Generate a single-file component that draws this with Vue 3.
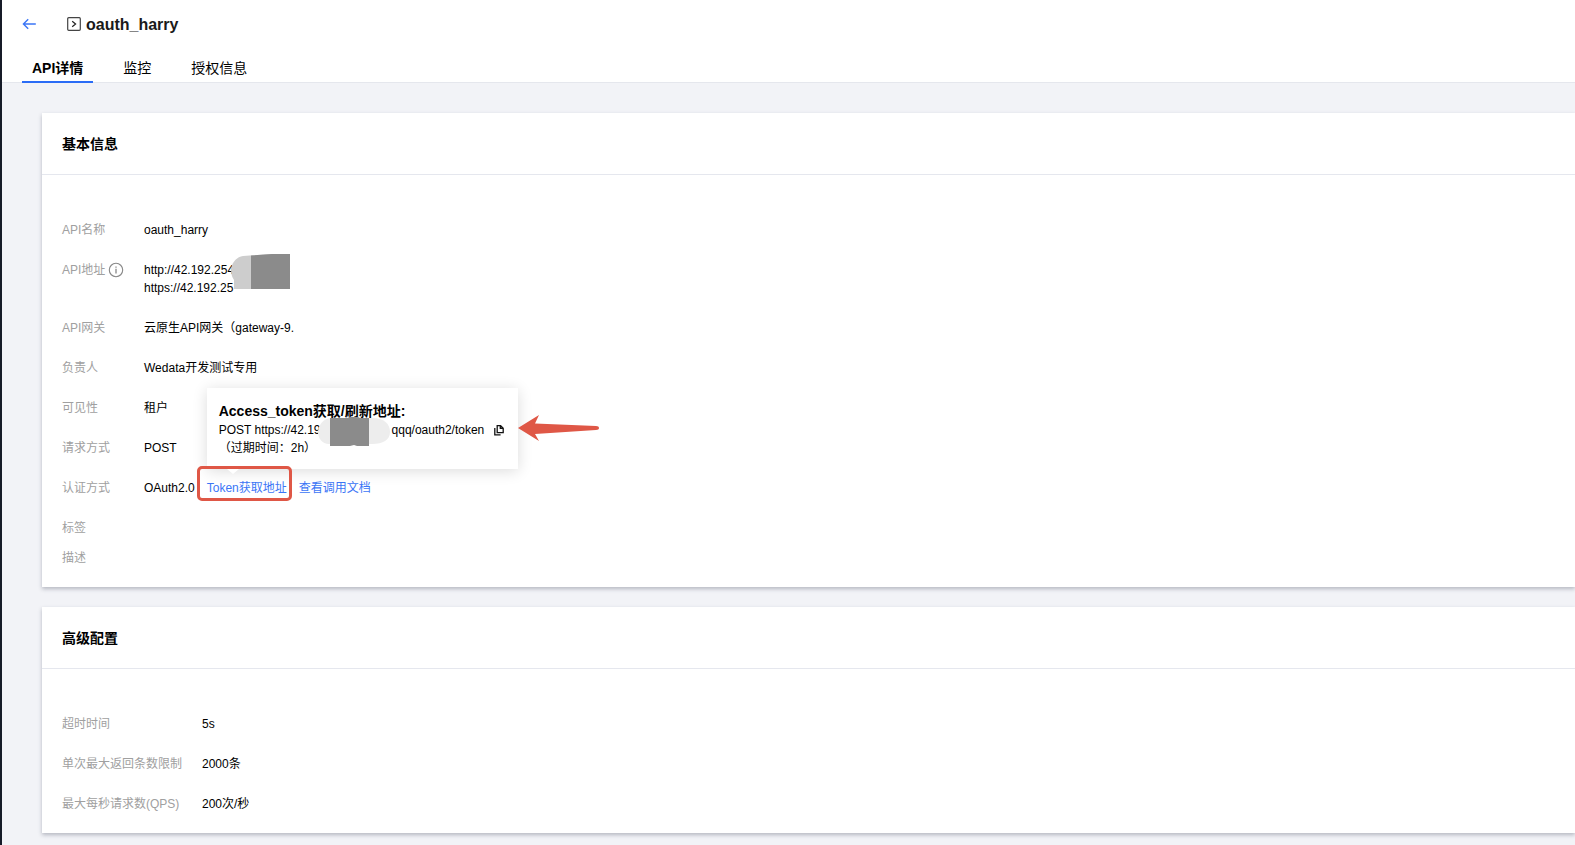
<script setup>
import { ref } from 'vue'

const tabs = ['API详情', '监控', '授权信息']
const active = ref(0)

const advanced = [
  { label: '超时时间', value: '5s' },
  { label: '单次最大返回条数限制', value: '2000条' },
  { label: '最大每秒请求数(QPS)', value: '200次/秒' },
]
</script>

<template>
  <div class="page">
    <header class="header">
      <div class="title-row">
        <button class="back" type="button" aria-label="返回">
          <svg width="14" height="12" viewBox="0 0 14 12" fill="none" stroke="currentColor" stroke-width="1.4">
            <path d="M6.2 1.2 1.4 6 6.2 10.8M1.4 6H13.8" />
          </svg>
        </button>
        <svg class="title-icon" width="14" height="14" viewBox="0 0 14 14" fill="none" stroke="#444" stroke-width="1.2">
          <rect x="0.7" y="0.7" width="12.6" height="12.6" rx="1" />
          <path d="M5.2 4.2 8.6 7 5.2 9.8" stroke="#222" />
        </svg>
        <h1>oauth_harry</h1>
      </div>
      <nav class="tabs">
        <button
          v-for="(tab, i) in tabs"
          :key="tab"
          type="button"
          class="tab"
          :class="{ active: i === active }"
          @click="active = i"
        >{{ tab }}</button>
      </nav>
    </header>

    <main class="content">
      <section class="card">
        <h2>基本信息</h2>
        <dl class="basic">
          <dt>API名称</dt>
          <dd>oauth_harry</dd>
          <dt>
            API地址
            <svg class="info" width="16" height="16" viewBox="0 0 16 16" fill="none" stroke="#888" stroke-width="1.1">
              <circle cx="8" cy="8" r="6.7" />
              <path d="M8 6.8V11.4M8 4.4V5.8" stroke-width="1.3" />
            </svg>
          </dt>
          <dd class="address">
            <div>http://42.192.254</div>
            <div>https://42.192.25</div>
            <svg class="address-mask" width="59" height="35" viewBox="0 0 59 35">
              <path d="M0 14C2 7 6 3 12 2L40 0H59V35H3V26C1 23 0 20 0 14Z" fill="#cdcdcd" />
              <path d="M20 1.5 41 0H59V35H20Z" fill="#8b8b8b" />
            </svg>
          </dd>
          <dt>API网关</dt>
          <dd>云原生API网关（gateway-9.</dd>
          <dt>负责人</dt>
          <dd>Wedata开发测试专用</dd>
          <dt>可见性</dt>
          <dd>租户</dd>
          <dt>请求方式</dt>
          <dd>POST</dd>
          <dt>认证方式</dt>
          <dd class="auth">
            <span>OAuth2.0</span>
            <span class="token">
              <a href="#token">Token获取地址</a>
              <span class="popover" role="tooltip">
                <strong>Access_token获取/刷新地址:</strong>
                <span class="endpoint">
                  <span>POST https://42.19</span>
                  <span class="token-mask">
                    <svg width="76" height="30" viewBox="0 0 76 30">
                      <path d="M18 1H58C70 1 76 7 76 15S69 27 58 27H15C8 27 4 21 4 15S9 1 18 1Z" fill="#ededed" />
                      <path d="M16 1 33 1 36 0H44L46 1H55V29H43L40 28L36 29H16Z" fill="#8b8b8b" />
                    </svg>
                  </span>
                  <span>qqq/oauth2/token</span>
                  <button class="copy" type="button" aria-label="复制">
                    <svg width="10" height="12" viewBox="0 0 10 12" fill="none" stroke="#111" stroke-width="1.3">
                      <path d="M3.2 1.7H6.6L9.2 4.2V8.7H3.2ZM6.3 1.7V4.4H9.2M0.8 4V10.8H6.6" />
                    </svg>
                  </button>
                </span>
                <span class="expiry">（过期时间：2h）</span>
                <svg class="arrow" width="81" height="26" viewBox="0 0 81 26">
                  <path d="M0 13 21 0 17 8.5 78 11Q81 11.2 81 13T78 15L17 19 21 26Z" fill="#df5746" />
                </svg>
              </span>
              <span class="highlight"></span>
            </span>
            <a href="#docs">查看调用文档</a>
          </dd>
          <dt class="compact">标签</dt>
          <dd class="compact"></dd>
          <dt>描述</dt>
          <dd></dd>
        </dl>
      </section>

      <section class="card">
        <h2>高级配置</h2>
        <dl class="advanced">
          <template v-for="row in advanced" :key="row.label">
            <dt>{{ row.label }}</dt>
            <dd>{{ row.value }}</dd>
          </template>
        </dl>
      </section>
    </main>
  </div>
</template>

<style>
body {
  background: #f2f3f7;
}
</style>

<style scoped>
.page {
  box-sizing: border-box;
  min-height: 100vh;
  border-left: 2px solid #161b28;
  overflow: hidden;
  background: #f2f3f7;
  color: #000;
  font: 12px/18px "Liberation Sans", "Noto Sans CJK SC", sans-serif;
}
button {
  border: 0;
  padding: 0;
  background: none;
  color: inherit;
  font: inherit;
  cursor: pointer;
}
svg {
  display: block;
}
.header {
  background: #fff;
  padding-left: 20px;
}
.title-row {
  display: flex;
  align-items: center;
  height: 48px;
}
.back {
  width: 14px;
  color: #3b76f6;
}
.title-icon {
  margin: 0 5px 0 31px;
}
h1 {
  margin: 0;
  padding-top: 2px;
  font-size: 16px;
  line-height: 24px;
  color: #1a1a1a;
}
.tabs {
  display: flex;
  gap: 20px;
  margin-left: -20px;
  padding-left: 20px;
  border-bottom: 1px solid #e5e7ed;
}
.tab {
  margin-bottom: -1px;
  padding: 10px 10px 3px;
  border-bottom: 2px solid transparent;
  font-size: 14px;
  line-height: 20px;
}
.tab.active {
  border-color: #2b6cf6;
  font-weight: bold;
}
.content {
  display: flex;
  flex-direction: column;
  gap: 20px;
  padding: 30px 0 12px 40px;
}
.card {
  background: #fff;
  box-shadow: 0 2px 4px rgba(54, 58, 80, 0.32);
}
h2 {
  margin: 0;
  padding: 21px 20px 19px;
  border-bottom: 1px solid #e5e7ee;
  font-size: 14px;
  line-height: 21px;
}
dl {
  display: grid;
  row-gap: 22px;
  margin: 0;
  padding: 46px 20px 20px;
}
.basic {
  grid-template-columns: 82px 1fr;
}
.advanced {
  grid-template-columns: 140px 1fr;
}
dt {
  display: flex;
  align-items: center;
  gap: 3px;
  height: 18px;
  color: #a0a0a0;
  white-space: nowrap;
}
dd {
  margin: 0;
  min-height: 18px;
}
.compact {
  margin-bottom: -10px;
}
.address {
  position: relative;
}
.address-mask {
  position: absolute;
  left: 87px;
  top: -7px;
}
.auth {
  display: flex;
}
.token {
  position: relative;
  margin: 0 12px;
}
a {
  color: #3b76f6;
  text-decoration: none;
}
.popover {
  position: absolute;
  left: 0;
  bottom: 28px;
  display: flex;
  flex-direction: column;
  padding: 14px 14px 12px 12px;
  background: #fff;
  box-shadow: 0 2px 14px rgba(0, 0, 0, 0.14);
  white-space: nowrap;
}
.popover::after {
  content: "";
  position: absolute;
  left: 20px;
  top: 100%;
  border: 6px solid transparent;
  border-top: 5px solid #fff;
  border-bottom: 0;
}
.popover strong {
  margin-bottom: 1px;
  font-size: 14px;
}
.endpoint {
  display: flex;
  align-items: center;
}
.token-mask {
  position: relative;
  width: 71px;
  height: 18px;
}
.token-mask svg {
  position: absolute;
  left: -7px;
  top: -4px;
}
.copy {
  margin-left: 10px;
}
.arrow {
  position: absolute;
  left: 100%;
  top: 27px;
}
.highlight {
  position: absolute;
  inset: -13px -5px -4px -10px;
  border: 3px solid #df5746;
  border-radius: 5px;
  pointer-events: none;
}
</style>
